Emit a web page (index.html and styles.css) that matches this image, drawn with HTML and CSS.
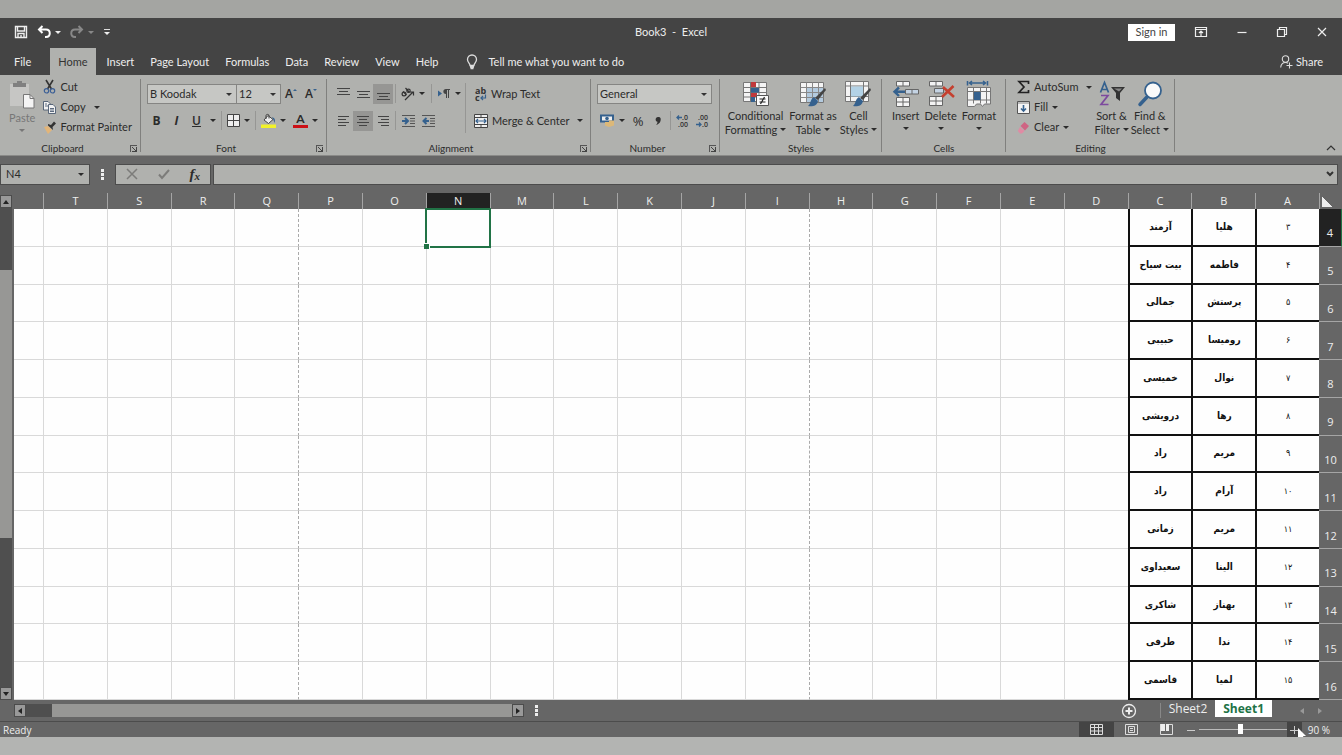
FILE: index.html
```html
<!DOCTYPE html>
<html lang="en">
  <head>
    <meta charset="UTF-8" />
    <meta name="viewport" content="width=device-width, initial-scale=1.0" />
    <title>Book3 - Excel</title>
    <link rel="stylesheet" href="styles.css">
  </head>
  <body>
    <div class="window">
      <header class="titlebar">
        <div class="quick">
          <button aria-label="Save"><svg width="14" height="14" viewBox="0 0 14 14" fill="none" stroke="#eee" stroke-width="1.4"><path d="M1.5 1.5h11v11h-11zM3.5 1.5v4.500h7v-4.500M4 12.500v-4h6v4"/><path d="M7 10v2.500"/></svg></button>
          <button class="with-caret" aria-label="Undo"><svg width="14" height="14" viewBox="0 0 14 14" fill="none" stroke="#fff" stroke-width="2"><path d="M5.500 1 2 4.500 5.500 8M2 4.500h7c5 0 5 7.500 0 7.500h-1"/></svg><i class="caret"></i></button>
          <button class="with-caret faded" aria-label="Redo"><svg width="14" height="14" viewBox="0 0 14 14" fill="none" stroke="#888" stroke-width="2"><path d="M8.500 1 12 4.500 8.500 8M12 4.500H5c-5 0-5 7.500 0 7.500h1"/></svg><i class="caret"></i></button>
          <button class="customize" aria-label="Customize Quick Access Toolbar"><i class="caret"></i></button>
        </div>
        <h1>Book3&nbsp; -&nbsp; Excel</h1>
        <div class="window-buttons">
          <button class="sign-in">Sign in</button>
          <button aria-label="Ribbon Display Options"><svg width="14" height="12" viewBox="0 0 14 12" fill="none" stroke="#eee" stroke-width="1.200"><path d="M1.500 1.500h11v9h-11zM1.500 3.500h11M7 10V5M5 7l2-2 2 2"/></svg></button>
          <button aria-label="Minimize"><svg width="12" height="12" viewBox="0 0 12 12" stroke="#eee" stroke-width="1.200"><path d="M1.500 6.500h9"/></svg></button>
          <button aria-label="Restore"><svg width="12" height="12" viewBox="0 0 12 12" fill="none" stroke="#eee" stroke-width="1.200"><path d="M1.500 3.500h7v7h-7zM3.500 3.500v-2h7v7h-2"/></svg></button>
          <button aria-label="Close"><svg width="12" height="12" viewBox="0 0 12 12" stroke="#eee" stroke-width="1.200"><path d="M2 2l8 8M10 2l-8 8"/></svg></button>
        </div>
      </header>

      <nav class="tabs">
        <button class="file">File</button>
        <button class="active">Home</button>
        <button>Insert</button>
        <button>Page Layout</button>
        <button>Formulas</button>
        <button>Data</button>
        <button>Review</button>
        <button>View</button>
        <button>Help</button>
        <button class="tell-me"><svg width="12" height="16" viewBox="0 0 12 16" fill="none" stroke="#ddd" stroke-width="1.300"><path d="M4 11.500C4 9 1.500 8.500 1.500 5.500a4.500 4.500 0 0 1 9 0C10.500 8.500 8 9 8 11.500zM4 13h4M4.500 14.500h3"/></svg>Tell me what you want to do</button>
        <button class="share"><svg width="13" height="13" viewBox="0 0 13 13" fill="none" stroke="#ddd" stroke-width="1.100"><circle cx="5.500" cy="4" r="3.200"/><path d="M.7 12.500C1 9 3 7.500 5.500 7.500c1 0 2 .3 2.500.7M6.500 10.500h6M9.500 7.500v6"/></svg>Share</button>
      </nav>

      <div class="ribbon">
        <section class="group clipboard">
          <div class="tools">
            <button class="big paste">
              <svg width="26" height="28" viewBox="0 0 26 28"><path fill="#c6c6c4" d="M1 3h19v22H1z"/><path fill="#808080" d="M4 2h4V0h5v2h4v4H4z"/><path fill="#f4f4f4" stroke="#777" d="M14.500 13.500h6.500l4 4v9.500h-10.500z"/><path fill="none" stroke="#777" d="M21 13.500v4h4"/></svg>
              <span>Paste</span><i class="caret"></i>
            </button>
            <div class="stack">
              <button><svg width="13" height="14" viewBox="0 0 13 14" fill="none"><path stroke="#333" stroke-width="1.600" d="M3 0l5.500 9M10 0L4.500 9"/><circle cx="3.500" cy="10.800" r="2.200" stroke="#3b5f96" stroke-width="1.200"/><circle cx="9.500" cy="10.800" r="2.200" stroke="#3b5f96" stroke-width="1.200"/></svg>Cut</button>
              <button><svg width="13" height="13" viewBox="0 0 13 13" fill="#f2f2f2" stroke="#4b5a70" stroke-width=".9"><path d="M.5.5h4.500l2 2v6.500H.5z"/><path d="M5.500 3.500h4.500l2.500 2.500v6.500h-7zM2 3h2M2 5h3M7 7.500h4M7 9h4M7 10.500h4"/></svg>Copy<i class="caret spaced"></i></button>
              <button><svg width="13" height="13" viewBox="0 0 13 13"><path fill="#e3b578" d="M1 6l4-1 4 4-4 4z"/><path fill="#333" d="M5 3l3 1 3-3.500 2 2L9.500 6l.5 3-5-4.500z"/></svg>Format Painter</button>
            </div>
          </div>
          <footer class="with-launcher">Clipboard<button class="launcher" aria-label="Clipboard settings"></button></footer>
        </section>

        <section class="group font">
          <div class="tools rows">
            <div class="line">
              <div class="combo family"><select aria-label="Font"><option>B Koodak</option></select></div><div class="combo size"><select aria-label="Font size"><option>12</option></select></div>
              <button class="glyph" aria-label="Increase font size">A<sup class="up"></sup></button>
              <button class="glyph" aria-label="Decrease font size">A<sup class="down"></sup></button>
            </div>
            <div class="line marks">
              <button class="glyph bold">B</button>
              <button class="glyph italic">I</button>
              <button class="glyph underline"><u>U</u></button><i class="caret"></i>
              <span class="rule"></span>
              <button aria-label="Borders"><svg width="13" height="13" viewBox="0 0 13 13" fill="#eee" stroke="#444"><path d="M.5.5h12v12H.5zM6.500.5v12M.5 6.500h12"/></svg></button><i class="caret"></i>
              <span class="rule"></span>
              <button aria-label="Fill color"><svg width="15" height="14" viewBox="0 0 15 14"><path fill="#eee" stroke="#444" d="M7 1.500l5 4-4.500 4L3 6z"/><path fill="none" stroke="#444" d="M5 5V1.500C5 0 8 0 8 1.500v3"/><path fill="#35618e" d="M11 3c3 1 3.500 3 2.500 6l-1-3z"/><path fill="#f2f22a" d="M0 10.500h15v3.500H0z"/></svg></button><i class="caret"></i>
              <button class="font-color" aria-label="Font color">A</button><i class="caret"></i>
            </div>
          </div>
          <footer class="with-launcher">Font<button class="launcher" aria-label="Font settings"></button></footer>
        </section>

        <section class="group alignment">
          <div class="tools">
            <div class="rows">
              <div class="line">
                <button class="cell-btn" aria-label="Top align"><svg width="13" height="14" viewBox="0 0 13 14" stroke="#444"><path d="M0 1.500h13M2 4.500h9M0 7.500h13"/></svg></button>
                <button class="cell-btn" aria-label="Middle align"><svg width="13" height="14" viewBox="0 0 13 14" stroke="#444"><path d="M0 4.500h13M2 7.500h9M0 10.500h13"/></svg></button>
                <button class="cell-btn on" aria-label="Bottom align"><svg width="13" height="14" viewBox="0 0 13 14" stroke="#444"><path d="M0 6.500h13M2 9.500h9M0 12.500h13"/></svg></button>
                <span class="rule"></span>
                <button class="cell-btn" aria-label="Orientation"><svg width="14" height="14" viewBox="0 0 14 14" fill="none" stroke="#333" stroke-width="1.200"><path d="M4 13l8-8M9 5h3.500v3.500"/><circle cx="3" cy="7" r="1.900"/><path d="M2 4.500l3.500 3.500M4.500 1l4 4.500"/><circle cx="7.500" cy="3.800" r="1.700"/></svg></button><i class="caret"></i>
                <span class="rule"></span>
                <button class="cell-btn" aria-label="Text direction"><svg width="12" height="12" viewBox="0 0 12 12"><path fill="#35618e" d="M0 2.500l4 3-4 3z"/><path fill="#444" d="M8 1h4v1h-1v8h-1V2H9v8H8V6C4.500 6 4.500 1 8 1z"/></svg></button><i class="caret"></i>
              </div>
              <div class="line">
                <button class="cell-btn" aria-label="Align left"><svg width="11" height="12" viewBox="0 0 11 12" stroke="#444"><path d="M0 1.500h11M0 4.500h8M0 7.500h11M0 10.500h8"/></svg></button>
                <button class="cell-btn on" aria-label="Center"><svg width="12" height="12" viewBox="0 0 12 12" stroke="#444"><path d="M0 1.500h12M2 4.500h8M0 7.500h12M2 10.500h8"/></svg></button>
                <button class="cell-btn" aria-label="Align right"><svg width="11" height="12" viewBox="0 0 11 12" stroke="#444"><path d="M0 1.500h11M3 4.500h8M0 7.500h11M3 10.500h8"/></svg></button>
                <span class="rule"></span>
                <button class="cell-btn" aria-label="Decrease indent"><svg width="13" height="12" viewBox="0 0 13 12"><path stroke="#555" d="M0 .5h13M8 3.500h5M8 6h5M8 8.500h5M0 11.500h13"/><path fill="none" stroke="#35618e" stroke-width="2" d="M0 6h5M3 3l3 3-3 3"/></svg></button>
                <button class="cell-btn" aria-label="Increase indent"><svg width="13" height="12" viewBox="0 0 13 12"><path stroke="#555" d="M0 .5h13M8 3.500h5M8 6h5M8 8.500h5M0 11.500h13"/><path fill="none" stroke="#35618e" stroke-width="2" d="M7 6H2M4.500 3l-3 3 3 3"/></svg></button>
              </div>
            </div>
            <div class="rows wrap-tools">
              <button><svg width="13" height="16" viewBox="0 0 13 16" font-family="Open Sans" font-weight="700" font-size="9" fill="#333"><text x="1" y="8">ab</text><text x="1" y="15">c</text><path fill="none" stroke="#35618e" stroke-width="1.200" d="M11.500 8.500V12H7M9 10l-2 2 2 2"/></svg>Wrap Text</button>
              <button><svg width="14" height="14" viewBox="0 0 14 14"><path fill="#eee" stroke="#444" d="M.5.5h13v13H.5zM.5 3.500h13M.5 10.500h13M7 .5v3M7 10.500v3"/><path fill="none" stroke="#35618e" stroke-width="1.200" d="M2 7h10M4 5L2 7l2 2M10 5l2 2-2 2"/></svg>Merge &amp; Center<i class="caret spaced"></i></button>
            </div>
          </div>
          <footer class="with-launcher">Alignment<button class="launcher" aria-label="Alignment settings"></button></footer>
        </section>

        <section class="group number">
          <div class="tools rows">
            <div class="line"><div class="combo format"><select aria-label="Number format"><option>General</option></select></div></div>
            <div class="line">
              <button class="cell-btn" aria-label="Accounting format"><svg width="14" height="13" viewBox="0 0 14 13"><path fill="#eee" stroke="#35618e" stroke-width="2" d="M1 1.500h12v6H1z"/><circle cx="7" cy="4.500" r="1.800" fill="#35618e"/><path fill="#dcb878" d="M5 8h4v-1.500h5v5l-5 1.500-4-1.500z"/></svg></button><i class="caret"></i>
              <button class="cell-btn glyph percent-style">%</button>
              <button class="cell-btn glyph comma" aria-label="Comma style"><svg width="6" height="8" viewBox="0 0 6 8"><path fill="#333" d="M3 0c3 0 3 2 2.500 4S3 7.500 1 8c1-1 1.500-2 1.500-3.200C0 4.500 0 0 3 0z"/></svg></button>
              <span class="rule"></span>
              <button class="cell-btn" aria-label="Increase decimal"><svg width="14" height="14" viewBox="0 0 14 14" font-family="Open Sans" font-weight="600" font-size="7" fill="#333"><text x="6" y="6">.0</text><text x="2" y="13">.00</text><path fill="none" stroke="#35618e" stroke-width="1.300" d="M6 3.500H1M3 1.500l-2 2 2 2"/></svg></button>
              <button class="cell-btn" aria-label="Decrease decimal"><svg width="14" height="14" viewBox="0 0 14 14" font-family="Open Sans" font-weight="600" font-size="7" fill="#333"><text x="2" y="6">.00</text><text x="6" y="13">.0</text><path fill="none" stroke="#35618e" stroke-width="1.300" d="M0 10.500h5M3 8.500l2 2-2 2"/></svg></button>
            </div>
          </div>
          <footer class="with-launcher">Number<button class="launcher" aria-label="Number settings"></button></footer>
        </section>

        <section class="group styles">
          <div class="tools">
            <button class="big">
              <svg width="26" height="26" viewBox="0 0 26 26"><path fill="#f4f4f4" stroke="#777" d="M.5 1.500h23v19H.5zM.5 6.500h23M.5 11.500h23M.5 16h23M7.500 1.500v19M16 1.500v19"/><path fill="#c0393c" d="M8 1h5v5H8zM8 12h6v4H8z"/><path fill="#35618e" d="M8 7h8v4.500H8zM8 16h4v5H8z"/><path fill="#fafafa" stroke="#555" d="M13.500 14.500h12v10h-12z"/><path fill="none" stroke="#222" stroke-width="1.200" d="M16.500 18h6M16.500 21h6M21.500 16l-4 7"/></svg>
              <span>Conditional<br>Formatting<i class="caret"></i></span>
            </button>
            <button class="big">
              <svg width="26" height="26" viewBox="0 0 26 26"><path fill="#f4f4f4" stroke="#777" d="M.5 1.500h23v20H.5z"/><path fill="#b3cade" d="M7 7h16v14H7z"/><path fill="none" stroke="#888" d="M.5 6.500h23M.5 11.500h23M.5 16.500h23M6.500 1.500v20M12.500 1.500v20M18.500 1.500v20"/><path fill="#444" d="M25 7l1 2-8 10-3-2z"/><path fill="#35618e" d="M14 16l4 4c-1 5-6 6-10 5 3-2 2-7 6-9z"/></svg>
              <span>Format as<br>Table<i class="caret"></i></span>
            </button>
            <button class="big">
              <svg width="26" height="26" viewBox="0 0 26 26"><path fill="#f4f4f4" stroke="#777" d="M.5.5h23v20H.5zM.5 5h23M.5 15.500h23M5.500.5v20M18.500.5v20"/><path fill="#b3d2e6" d="M6 5.500h12v10H6z"/><path fill="#444" d="M25 7l1 2-8 10-3-2z"/><path fill="#35618e" d="M14 16l4 4c-1 5-6 6-10 5 3-2 2-7 6-9z"/></svg>
              <span>Cell<br>Styles<i class="caret"></i></span>
            </button>
          </div>
          <footer>Styles</footer>
        </section>

        <section class="group cells">
          <div class="tools">
            <button class="big">
              <svg width="26" height="26" viewBox="0 0 26 26" fill="#f4f4f4" stroke="#666"><path d="M3.500.5h13v4.500h-13zM10 .5V5M3.500 16.500h13v9h-13zM10 16.500v9M3.500 21h13"/><path fill="#c4d3e3" d="M12.500 8.500h13V13h-13zM19 8.500V13"/><path fill="none" stroke="#35618e" stroke-width="2.400" d="M12 10.700H2M6 6.500l-4.500 4.200L6 15"/></svg>
              <span>Insert</span><i class="caret"></i>
            </button>
            <button class="big">
              <svg width="26" height="26" viewBox="0 0 26 26" fill="#f4f4f4" stroke="#666"><path d="M1.500.5h13v4.500h-13zM8 .5V5M1.500 15.500h13v9h-13zM8 15.500v9M1.500 20h13"/><path fill="#c4d3e3" d="M6.500 7.500h9V12h-9z"/><path fill="none" stroke="#c5402f" stroke-width="2.600" d="M15 6l11 10M25.500 5L14 16"/></svg>
              <span>Delete</span><i class="caret"></i>
            </button>
            <button class="big">
              <svg width="26" height="26" viewBox="0 0 26 26" fill="#f4f4f4" stroke="#777"><path fill="none" stroke="#35618e" stroke-width="1.500" d="M1.500 0v4.500M21.500 0v4.500M3 2h17M6 0L3.500 2 6 4M17 0l2.500 2L17 4"/><path d="M1.500 6.500h23v16.500h-6l-2 2.500-2-2.500h-4l-2 2.500H1.500zM1.500 10.500h23M1.500 19h23M7.500 6.500v16M14.500 6.500v16M20.500 6.500v16"/><path fill="#35618e" stroke="none" d="M8 11h6.500v8H8z"/></svg>
              <span>Format</span><i class="caret"></i>
            </button>
          </div>
          <footer>Cells</footer>
        </section>

        <section class="group editing">
          <div class="tools">
            <div class="stack">
              <button><svg width="13" height="14" viewBox="0 0 13 14"><path fill="none" stroke="#222" stroke-width="1.700" d="M11.500 4V1.500H2L7 7l-5 5.500h9.500V10"/></svg>AutoSum<i class="caret spaced"></i></button>
              <button><svg width="13" height="13" viewBox="0 0 13 13"><path fill="#f4f4f4" stroke="#555" d="M.5.5h12v12H.5z"/><path fill="#bbb" d="M1 1h11v2H1z"/><path fill="none" stroke="#35618e" stroke-width="1.600" d="M6.500 4v6M4 7.500l2.500 2.500L9 7.500"/></svg>Fill<i class="caret"></i></button>
              <button><svg width="13" height="13" viewBox="0 0 13 13"><path fill="#cf6483" d="M7.500 1l4.500 4-4 4.500L3.500 5z"/><path fill="#e08ba4" d="M3 6l4.500 4L5 12.500H3L.8 10z"/></svg>Clear<i class="caret"></i></button>
            </div>
            <button class="big">
              <svg width="26" height="26" viewBox="0 0 26 26" fill="none" stroke-width="1.700"><path stroke="#35618e" d="M1.500 11.500L5.500 1.500l4 10M3 8.500h5"/><path stroke="#7d4a9e" d="M2 14.500h7L2 23.500h7.500"/><path fill="#333" d="M12 6h14l-5 6v8l-4-3v-5z"/><path fill="#888" d="M15 7.500h8l-3 3z"/></svg>
              <span>Sort &amp;<br>Filter<i class="caret"></i></span>
            </button>
            <button class="big">
              <svg width="26" height="26" viewBox="0 0 26 26"><circle cx="16" cy="9.500" r="8" fill="#fafafa" stroke="#35618e" stroke-width="1.800"/><path stroke="#35618e" stroke-width="3.500" stroke-linecap="round" d="M10 16l-7 7.500"/></svg>
              <span>Find &amp;<br>Select<i class="caret"></i></span>
            </button>
          </div>
          <footer>Editing</footer>
        </section>
        <button class="collapse" aria-label="Collapse the Ribbon"><svg width="10" height="6" viewBox="0 0 10 6" fill="none" stroke="#333" stroke-width="1.200"><path d="M1 5l4-4 4 4"/></svg></button>
      </div>

      <div class="formula-bar">
        <div class="name-box"><input type="text" value="N4" aria-label="Name Box"><i class="caret"></i></div>
        <span class="dots"></span>
        <div class="entry-buttons">
          <button aria-label="Cancel"><svg width="12" height="12" viewBox="0 0 12 12" stroke="#7c7c7a" stroke-width="1.500"><path d="M1 1l10 10M11 1L1 11"/></svg></button>
          <button aria-label="Enter"><svg width="12" height="12" viewBox="0 0 12 12" fill="none" stroke="#7c7c7a" stroke-width="2"><path d="M1 6.500l3 3.500 7-8"/></svg></button>
          <button class="fx" aria-label="Insert Function">f<sub>x</sub></button>
        </div>
        <div class="formula"><input type="text" aria-label="Formula Bar"><svg width="8" height="6" viewBox="0 0 8 6" fill="none" stroke="#333" stroke-width="2"><path d="M1 1l3 3 3-3"/></svg></div>
      </div>

      <main class="sheet">
        <div class="vscroll">
          <button aria-label="Scroll up"><i class="arrow up"></i></button>
          <div class="track"><div class="thumb"></div></div>
          <button aria-label="Scroll down"><i class="arrow down"></i></button>
        </div>
        <div class="grid-area">
          <table class="grid" dir="rtl">
            <colgroup id="cols"></colgroup>
            <thead><tr id="letters"></tr></thead>
            <tbody id="rows"></tbody>
          </table>
        </div>
      </main>

      <div class="sheet-bar">
        <div class="hscroll">
          <button aria-label="Scroll left"><i class="arrow left"></i></button>
          <div class="track"><div class="thumb"></div></div>
          <button aria-label="Scroll right"><i class="arrow right"></i></button>
        </div>
        <span class="dots"></span>
        <div class="sheet-tabs">
          <button class="new-sheet" aria-label="New sheet"><svg width="16" height="16" viewBox="0 0 16 16" fill="none" stroke="#eee" stroke-width="1.300"><circle cx="8" cy="8" r="6.500"/><path stroke-width="2" d="M8 4.500v7M4.500 8h7"/></svg></button>
          <span class="divider"></span>
          <button class="sheet-tab">Sheet2</button>
          <button class="sheet-tab current">Sheet1</button>
          <button class="step" aria-label="Previous sheet"><i class="arrow left"></i></button>
          <button class="step" aria-label="Next sheet"><i class="arrow right"></i></button>
        </div>
      </div>

      <footer class="status">
        <span class="ready">Ready</span>
        <button class="view on" aria-label="Normal"><svg width="13" height="11" viewBox="0 0 13 11" fill="none" stroke="#ddd"><path d="M.5.5h12v10H.5zM.5 3.500h12M.5 7h12M4.500.5v10M8.500.5v10"/></svg></button>
        <button class="view" aria-label="Page Layout"><svg width="13" height="11" viewBox="0 0 13 11" fill="none" stroke="#ddd"><path d="M.5.5h12v10H.5zM3.500 2.500h6v6h-6zM5 4.500h3M5 6.500h3"/></svg></button>
        <button class="view" aria-label="Page Break Preview"><svg width="13" height="11" viewBox="0 0 13 11"><path fill="#eee" d="M1 0h4v7H1zM6 0h3v7H6z"/><path fill="none" stroke="#ddd" d="M.5 0v10.500h12V.5H9"/></svg></button>
        <button class="zoom-btn" aria-label="Zoom out"><svg width="8" height="8" viewBox="0 0 8 8" stroke="#ccc"><path d="M0 4.500h8"/></svg></button>
        <input class="zoom" type="range" min="0" max="100" value="47" aria-label="Zoom">
        <button class="zoom-btn on" aria-label="Zoom in"><svg width="8" height="8" viewBox="0 0 8 8" stroke="#ccc"><path d="M0 4.500h8M4.500 0v8"/></svg>
          <svg class="pointer" width="9" height="13" viewBox="0 0 9 13"><path fill="#fff" d="M0 0l8 8H5l1.500 4-2 .8L3 9l-3 2z"/></svg></button>
        <span class="percent">90 %</span>
      </footer>
    </div>
    <script src="script.js"></script>
  </body>
</html>
```

FILE: styles.css
```css
* {
  box-sizing: border-box;
}
body {
  margin: 0;
  height: 100vh;
  padding: 18px 0;
  background: linear-gradient(#a4a5a2 50%, #b3b4b2 50%);
  font-family: Lato, "Open Sans", sans-serif;
  font-size: 11px;
  line-height: 14px;
  color: #2b2b2b;
}
button,
input,
select {
  font: inherit;
  color: inherit;
  background: none;
  border: none;
  border-radius: 0;
  padding: 0;
  margin: 0;
}
button {
  display: flex;
  align-items: center;
  justify-content: center;
  white-space: nowrap;
}
svg {
  flex: none;
  overflow: visible;
}
.window {
  display: flex;
  flex-direction: column;
  height: 100%;
  background-color: #666;
  overflow: hidden;
}
.caret {
  flex: none;
  display: inline-block;
  border: 3px solid transparent;
  border-top-color: currentColor;
  border-bottom: none;
}
.caret.spaced {
  margin-left: 4px;
}

/* title bar */
.titlebar {
  display: grid;
  grid-template-columns: 1fr auto 1fr;
  align-items: center;
  height: 28px;
  background-color: #444;
  color: #eee;
}
.titlebar h1 {
  margin: 0;
  font-size: 11px;
  font-weight: 400;
}
.quick {
  display: flex;
  gap: 9px;
  padding-left: 14px;
}
.with-caret {
  gap: 4px;
}
.faded {
  color: #888;
}
.customize {
  border-top: 1px solid #ddd;
  padding-top: 2px;
  margin: 4px 1px;
}
.window-buttons {
  display: flex;
  justify-content: flex-end;
  align-items: center;
  gap: 28px;
  padding-right: 14px;
}
.sign-in {
  width: 47px;
  height: 17px;
  margin-right: -9px;
  background-color: #fff;
  color: #444;
}

/* tabs */
.tabs {
  display: flex;
  height: 29px;
  padding-top: 2px;
  background-color: #444;
  color: #eee;
}
.tabs button {
  padding: 0 8px;
}
.tabs .file {
  padding: 0 19px 0 14px;
}
.tabs .active {
  margin-right: 3px;
  background-color: #b0b1ae;
  color: #333;
}
.tabs .tell-me {
  gap: 10px;
  padding-left: 20px;
}
.tabs .share {
  gap: 3px;
  margin-left: auto;
  padding-right: 19px;
}

/* ribbon */
.ribbon {
  display: flex;
  height: 81px;
  background-color: #b0b1ae;
  border-bottom: 1px solid #8a8a88;
}
.group {
  position: relative;
  display: flex;
  flex-direction: column;
}
.group::after {
  content: "";
  position: absolute;
  right: 0;
  top: 4px;
  bottom: 3px;
  border-right: 1px solid #80807e;
}
.clipboard {
  width: 141px;
}
.font {
  width: 186px;
}
.alignment {
  width: 264px;
}
.number {
  width: 129px;
}
.styles {
  width: 162px;
}
.cells {
  width: 124px;
}
.editing {
  width: 169px;
}
.group footer {
  display: flex;
  justify-content: center;
  align-items: center;
  height: 14px;
  font-size: 10px;
  position: relative;
}
.group .with-launcher {
  padding-right: 16px;
}
.launcher {
  position: absolute;
  right: 4px;
  top: 4px;
  width: 7px;
  height: 7px;
  border-left: 1px solid #555;
  border-top: 1px solid #555;
}
.launcher::after {
  content: "";
  width: 4px;
  height: 4px;
  border-right: 1px solid #444;
  border-bottom: 1px solid #444;
  background: linear-gradient(45deg, transparent 40%, #444 40% 60%, transparent 60%);
}
.tools {
  flex: 1;
  display: flex;
}
.rows {
  display: flex;
  flex-direction: column;
  padding-top: 8px;
  gap: 6px;
}
.line {
  display: flex;
  align-items: center;
  height: 21px;
}
.stack {
  display: flex;
  flex-direction: column;
  padding-top: 2px;
}
.stack button {
  height: 20px;
  justify-content: flex-start;
  gap: 4px;
}
.big {
  flex-direction: column;
  justify-content: flex-start;
  padding-top: 6px;
}
.big span {
  margin-top: 2px;
}
.big > .caret {
  margin-top: 4px;
}
.big span .caret {
  margin: 0 0 3px 3px;
}
.clipboard .tools {
  padding-left: 9px;
  gap: 8px;
}
.paste {
  color: #777;
}
.font .tools,
.number .tools {
  padding-left: 6px;
}
.combo {
  position: relative;
  height: 20px;
  border: 1px solid #858583;
  background-color: #c6c7c4;
}
.combo::after {
  content: "";
  position: absolute;
  right: 4px;
  top: 8px;
  border: 3px solid transparent;
  border-top-color: #333;
  border-bottom: none;
}
.combo select {
  appearance: none;
  width: 100%;
  height: 18px;
  padding-left: 2px;
}
.family {
  width: 90px;
}
.size {
  width: 44px;
  border-left: none;
}
.format {
  width: 115px;
}
.glyph {
  width: 20px;
  font-family: "Open Sans", sans-serif;
  font-size: 12px;
  font-weight: 600;
}
.glyph sup {
  border: 2px solid transparent;
  margin-bottom: 8px;
}
.glyph .up {
  border-bottom-color: #35618e;
  border-top: none;
}
.glyph .down {
  border-top-color: #35618e;
  border-bottom: none;
}
.bold {
  font-weight: 700;
}
.italic {
  font-style: italic;
  font-weight: 700;
}
.marks {
  gap: 0 1px;
}
.marks .glyph {
  width: 19px;
}
.rule {
  width: 1px;
  height: 19px;
  margin: 0 4px;
  background-color: #969694;
}
.marks .caret {
  margin-left: 3px;
}
.font-color {
  width: 15px;
  height: 14px;
  margin-left: 6px;
  font-size: 12px;
  font-weight: 700;
  border-bottom: 3px solid #cc1016;
}
.cell-btn {
  width: 20px;
  height: 20px;
}
.cell-btn.on {
  background-color: #969694;
}
.alignment .rows {
  padding-left: 6px;
}
.alignment .rule,
.number .rule {
  margin: 0 2px;
}
.alignment .line .caret {
  margin: 0 4px 0 1px;
}
.number .line .caret {
  margin: 0 3px 0 2px;
}
.alignment .wrap-tools {
  margin: 8px 0;
  padding: 0 0 0 8px;
  border-left: 1px solid #969694;
}
.wrap-tools button {
  height: 21px;
  gap: 4px;
  justify-content: flex-start;
}
.percent-style {
  font-size: 13px;
  font-weight: 400;
}
.styles .tools {
  justify-content: center;
  gap: 3px;
}
.cells .tools {
  justify-content: center;
  gap: 5px;
}
.editing .tools {
  padding-left: 11px;
  gap: 2px;
}
.collapse {
  margin: auto 6px 4px auto;
}

/* formula bar */
.formula-bar {
  display: flex;
  align-items: center;
  height: 37px;
  padding: 8px 4px 9px 0;
}
.name-box,
.entry-buttons,
.formula {
  display: flex;
  align-items: center;
  height: 21px;
  background-color: #b0b1ae;
  border: 1px solid #4c4c4c;
}
.name-box {
  width: 90px;
  padding: 0 5px;
}
.name-box input {
  flex: 1;
  min-width: 0;
}
.dots {
  width: 3px;
  height: 11px;
  margin: 0 11px;
  background: repeating-linear-gradient(#eee 0 3px, transparent 3px 4px);
}
.entry-buttons {
  width: 96px;
  justify-content: space-around;
}
.fx {
  font-family: "Liberation Serif", serif;
  font-style: italic;
  font-weight: 700;
  font-size: 15px;
}
.fx sub {
  font-size: 11px;
  margin-top: 4px;
}
.formula {
  flex: 1;
  margin-left: 2px;
  padding-right: 3px;
}
.formula input {
  flex: 1;
}

/* sheet */
.sheet {
  flex: 1;
  min-height: 0;
  display: flex;
}
.vscroll {
  width: 12px;
  margin: 2px 2px 0 0;
  display: flex;
  flex-direction: column;
}
.vscroll button,
.hscroll button {
  width: 12px;
  height: 13px;
  background-color: #999;
  border: 1px solid #4c4c4c;
}
.track {
  flex: 1;
  display: flex;
  background-color: #4f4f4f;
}
.vscroll .track {
  flex-direction: column;
}
.vscroll .thumb {
  height: 56%;
  margin-top: 62px;
}
.thumb {
  background-color: #979795;
}
.arrow {
  border: 3px solid transparent;
}
.arrow.up {
  border-bottom: 4px solid #222;
  border-top: none;
}
.arrow.down {
  border-top: 4px solid #222;
  border-bottom: none;
}
.arrow.left {
  border-right: 4px solid #222;
  border-left: none;
}
.arrow.right {
  border-left: 4px solid #222;
  border-right: none;
}
.grid-area {
  flex: 1;
  min-width: 0;
}
.grid {
  table-layout: fixed;
  width: 100%;
  height: 100%;
  border-spacing: 0;
  background-color: #fefefe;
}
.grid .head-col {
  width: 23px;
}
.grid .part-col {
  width: 29px;
}
.grid th {
  padding: 0;
  font-family: "Open Sans", sans-serif;
  font-weight: 400;
  background-color: #666;
  color: #eee;
}
.grid thead th {
  height: 16px;
  border-left: 1px solid #a5a5a5;
}
.grid thead th:last-child {
  border-left: none;
}
.grid thead .picked,
.grid tbody .picked {
  background-color: #222;
}
.grid tbody th {
  padding-top: 12px;
  border-bottom: 1px solid #a5a5a5;
}
.grid tbody .picked {
  border-right: 1px solid #217346;
}
.corner i {
  display: block;
  width: 10px;
  height: 10px;
  margin: 2px auto 0 2px;
  background: linear-gradient(45deg, #eee 50%, transparent 50%);
}
.grid td {
  padding: 0;
  text-align: center;
  border-left: 1px solid #d9d9d9;
  border-bottom: 1px solid #d9d9d9;
}
.grid td:last-child {
  border-left: none;
}
.grid .page-break {
  border-left: 1px dashed #aaa;
}
.grid .name,
.grid .index {
  border-left: 2px solid #111;
  border-bottom: 2px solid #111;
  font-family: "DejaVu Sans Condensed", "DejaVu Sans", sans-serif;
  font-size: 10px;
  color: #111;
}
.name {
  font-weight: 700;
}
.grid .index {
  font-size: 9px;
}
.grid .selected {
  position: relative;
}
.selected::before {
  content: "";
  position: absolute;
  inset: -1px -1px -2px -2px;
  border: 2px solid #217346;
}
.selected::after {
  content: "";
  position: absolute;
  left: -3px;
  bottom: -3px;
  width: 5px;
  height: 5px;
  background-color: #217346;
  border: 1px solid #fff;
  border-width: 1px 1px 0 0;
}

/* sheet tabs */
.sheet-bar {
  display: flex;
  align-items: center;
  height: 22px;
  border-bottom: 1px solid #4c4c4c;
}
.hscroll {
  width: 38%;
  height: 13px;
  margin-left: 14px;
  display: flex;
}
.hscroll .thumb {
  flex: 1;
  margin-left: 26px;
}
.sheet-tabs {
  display: flex;
  align-items: flex-start;
  height: 100%;
  margin-left: auto;
  padding-right: 20px;
  font-family: "Open Sans", sans-serif;
  font-size: 12px;
  color: #eee;
}
.new-sheet {
  height: 22px;
  margin-right: 23px;
}
.divider {
  width: 1px;
  height: 15px;
  margin-top: 3px;
  background-color: #888;
}
.sheet-tab {
  height: 17px;
  padding: 0 8px;
}
.current {
  background-color: #fff;
  color: #217346;
  font-weight: 700;
}
.step {
  height: 22px;
  margin-left: 14px;
}
.step .arrow.left {
  border-right-color: #999;
}
.step .arrow.right {
  border-left-color: #999;
}
.sheet-tab + .step {
  margin-left: 28px;
}

/* status bar */
.status {
  display: flex;
  align-items: center;
  height: 15px;
  padding: 0 12px 0 3px;
  font-family: "Open Sans", sans-serif;
  font-size: 10px;
  color: #eee;
}
.ready {
  margin-right: auto;
}
.view {
  width: 35px;
  height: 15px;
}
.view.on,
.zoom-btn.on {
  background-color: #444;
}
.zoom-btn {
  position: relative;
  width: 15px;
  height: 15px;
}
.zoom {
  appearance: none;
  width: 88px;
  height: 15px;
}
.zoom::-webkit-slider-runnable-track {
  height: 1px;
  background-color: #bbb;
}
.zoom::-webkit-slider-thumb {
  appearance: none;
  width: 5px;
  height: 10px;
  margin-top: -5px;
  background-color: #fff;
}
.pointer {
  position: absolute;
  left: 11px;
  top: 6px;
}
.percent {
  margin-left: 6px;
}
```

FILE: script.js
```javascript
const letters = "ABCDEFGHIJKLMNOPQRST".split("");
const pageBreaks = ["H", "P"];
const people = [
  ["۳", "هلیا", "آزمند"],
  ["۴", "فاطمه", "بیت سیاح"],
  ["۵", "پرستش", "جمالی"],
  ["۶", "رومیسا", "حبیبی"],
  ["۷", "نوال", "خمیسی"],
  ["۸", "رها", "درویشی"],
  ["۹", "مریم", "راد"],
  ["۱۰", "آرام", "راد"],
  ["۱۱", "مریم", "زمانی"],
  ["۱۲", "الینا", "سعیداوی"],
  ["۱۳", "بهناز", "شاکری"],
  ["۱۴", "ندا", "طرفی"],
  ["۱۵", "لمیا", "قاسمی"],
];

function cell(letter, col, row, person) {
  if (col < 3) {
    return `<td class="${col === 0 ? "index" : "name"}">${person[col]}</td>`;
  }
  if (letter === "N" && row === 4) return '<td class="selected"></td>';
  return pageBreaks.includes(letter) ? '<td class="page-break"></td>' : "<td></td>";
}

document.getElementById("cols").innerHTML =
  '<col class="head-col">' + "<col>".repeat(letters.length) + '<col class="part-col">';

document.getElementById("letters").innerHTML =
  '<th class="corner"><i></i></th>' +
  letters.map((l) => `<th${l === "N" ? ' class="picked"' : ""}>${l}</th>`).join("") +
  "<th></th>";

document.getElementById("rows").innerHTML = people
  .map((person, i) => {
    const row = i + 4;
    return (
      `<tr><th${row === 4 ? ' class="picked"' : ""}>${row}</th>` +
      letters.map((l, col) => cell(l, col, row, person)).join("") +
      "<td></td></tr>"
    );
  })
  .join("");
```
